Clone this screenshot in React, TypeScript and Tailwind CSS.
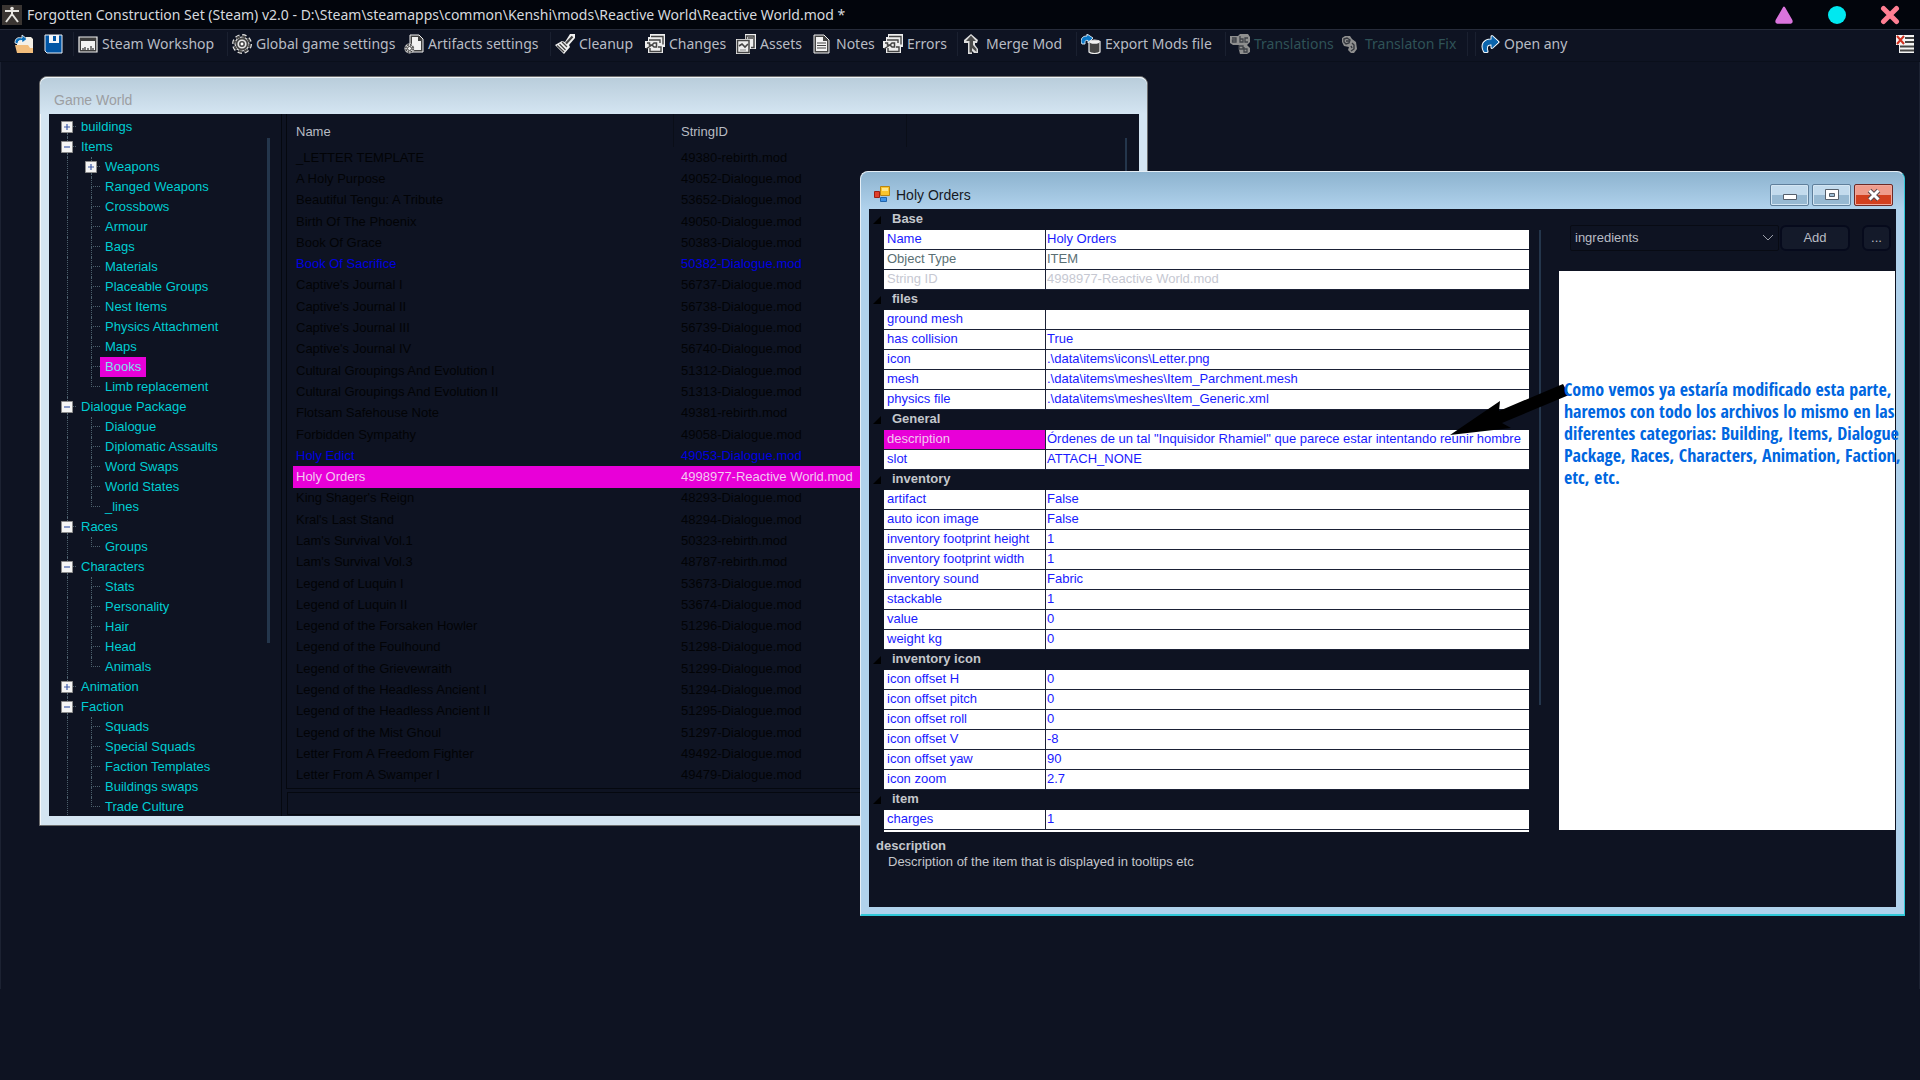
import React from "react";

type Node = { label: string; open?: boolean; children?: Node[]; selected?: boolean };

const leaf = (label: string): Node => ({ label });

const tree: Node[] = [
  { label: "buildings", open: false },
  {
    label: "Items",
    open: true,
    children: [
      { label: "Weapons", open: false },
      leaf("Ranged Weapons"),
      leaf("Crossbows"),
      leaf("Armour"),
      leaf("Bags"),
      leaf("Materials"),
      leaf("Placeable Groups"),
      leaf("Nest Items"),
      leaf("Physics Attachment"),
      leaf("Maps"),
      { label: "Books", selected: true },
      leaf("Limb replacement"),
    ],
  },
  {
    label: "Dialogue Package",
    open: true,
    children: [
      leaf("Dialogue"),
      leaf("Diplomatic Assaults"),
      leaf("Word Swaps"),
      leaf("World States"),
      leaf("_lines"),
    ],
  },
  { label: "Races", open: true, children: [leaf("Groups")] },
  {
    label: "Characters",
    open: true,
    children: [
      leaf("Stats"),
      leaf("Personality"),
      leaf("Hair"),
      leaf("Head"),
      leaf("Animals"),
    ],
  },
  { label: "Animation", open: false },
  {
    label: "Faction",
    open: true,
    children: [
      leaf("Squads"),
      leaf("Special Squads"),
      leaf("Faction Templates"),
      leaf("Buildings swaps"),
      leaf("Trade Culture"),
    ],
  },
];

const books: [string, string, string?][] = [
  ["_LETTER TEMPLATE", "49380-rebirth.mod"],
  ["A Holy Purpose", "49052-Dialogue.mod"],
  ["Beautiful Tengu: A Tribute", "53652-Dialogue.mod"],
  ["Birth Of The Phoenix", "49050-Dialogue.mod"],
  ["Book Of Grace", "50383-Dialogue.mod"],
  ["Book Of Sacrifice", "50382-Dialogue.mod", "changed"],
  ["Captive's Journal I", "56737-Dialogue.mod"],
  ["Captive's Journal II", "56738-Dialogue.mod"],
  ["Captive's Journal III", "56739-Dialogue.mod"],
  ["Captive's Journal IV", "56740-Dialogue.mod"],
  ["Cultural Groupings And Evolution I", "51312-Dialogue.mod"],
  ["Cultural Groupings And Evolution II", "51313-Dialogue.mod"],
  ["Flotsam Safehouse Note", "49381-rebirth.mod"],
  ["Forbidden Sympathy", "49058-Dialogue.mod"],
  ["Holy Edict", "49053-Dialogue.mod", "changed"],
  ["Holy Orders", "4998977-Reactive World.mod", "selected"],
  ["King Shager's Reign", "48293-Dialogue.mod"],
  ["Kral's Last Stand", "48294-Dialogue.mod"],
  ["Lam's Survival Vol.1", "50323-rebirth.mod"],
  ["Lam's Survival Vol.3", "48787-rebirth.mod"],
  ["Legend of Luquin I", "53673-Dialogue.mod"],
  ["Legend of Luquin II", "53674-Dialogue.mod"],
  ["Legend of the Forsaken Howler", "51296-Dialogue.mod"],
  ["Legend of the Foulhound", "51298-Dialogue.mod"],
  ["Legend of the Grievewraith", "51299-Dialogue.mod"],
  ["Legend of the Headless Ancient I", "51294-Dialogue.mod"],
  ["Legend of the Headless Ancient II", "51295-Dialogue.mod"],
  ["Legend of the Mist Ghoul", "51297-Dialogue.mod"],
  ["Letter From A Freedom Fighter", "49492-Dialogue.mod"],
  ["Letter From A Swamper I", "49479-Dialogue.mod"],
];

const groups: { name: string; rows: [string, string, string?][] }[] = [
  {
    name: "Base",
    rows: [
      ["Name", "Holy Orders"],
      ["Object Type", "ITEM", "readonly"],
      ["String ID", "4998977-Reactive World.mod", "disabled"],
    ],
  },
  {
    name: "files",
    rows: [
      ["ground mesh", ""],
      ["has collision", "True"],
      ["icon", ".\\data\\items\\icons\\Letter.png"],
      ["mesh", ".\\data\\items\\meshes\\Item_Parchment.mesh"],
      ["physics file", ".\\data\\items\\meshes\\Item_Generic.xml"],
    ],
  },
  {
    name: "General",
    rows: [
      [
        "description",
        'Órdenes de un tal "Inquisidor Rhamiel" que parece estar intentando reunir hombre',
        "selected",
      ],
      ["slot", "ATTACH_NONE"],
    ],
  },
  {
    name: "inventory",
    rows: [
      ["artifact", "False"],
      ["auto icon image", "False"],
      ["inventory footprint height", "1"],
      ["inventory footprint width", "1"],
      ["inventory sound", "Fabric"],
      ["stackable", "1"],
      ["value", "0"],
      ["weight kg", "0"],
    ],
  },
  {
    name: "inventory icon",
    rows: [
      ["icon offset H", "0"],
      ["icon offset pitch", "0"],
      ["icon offset roll", "0"],
      ["icon offset V", "-8"],
      ["icon offset yaw", "90"],
      ["icon zoom", "2.7"],
    ],
  },
  { name: "item", rows: [["charges", "1"]] },
];

// ---- toolbar icons, all on a 20x20 grid ----

const Svg: React.FC<{ children: React.ReactNode }> = ({ children }) => (
  <svg viewBox="0 0 20 20" className="h-5 w-5 shrink-0" aria-hidden="true">
    {children}
  </svg>
);

const FolderIcon = () => (
  <Svg>
    <path d="M3 6h8l1-3h5l2 2v14H3z" fill="#f4efe6" />
    <path d="M1 11h13l2 3h3v5H3z" fill="#f2bd7c" />
    <path d="M1 9C1 4 4 3 8 4V1l5 4-5 4V6.500C5 6 4 7 4 10z" fill="#0a6db8" stroke="#fff" strokeWidth=".8" />
  </Svg>
);

const SaveIcon = () => (
  <Svg>
    <path d="M1 1h17v18H3l-2-2z" fill="#0055a5" stroke="#e8eef4" strokeWidth="1" />
    <path d="M5 1h10v8H5z" fill="#f2f4f8" />
    <path d="M9 2h3v5H9z" fill="#0055a5" />
  </Svg>
);

const WorkshopIcon = () => (
  <Svg>
    <path d="M1 3h18v15H1z" fill="#3d3d3d" stroke="#eee" strokeWidth="1.200" />
    <path d="M3 7h14v9H3z" fill="#f3f3f3" />
    <path d="M5 16v-2m2 2v-3m3 3v-2m3 2v-4m2 4v-2" stroke="#3d3d3d" strokeWidth="1.300" />
  </Svg>
);

const GearIcon = () => (
  <Svg>
    <circle cx="10" cy="10" r="8" fill="none" stroke="#e6e6e6" strokeWidth="4" strokeDasharray="3.800 2.480" />
    <circle cx="10" cy="10" r="7.500" fill="#e6e6e6" />
    <circle cx="10" cy="10" r="7.700" fill="none" stroke="#444" strokeWidth="2.200" strokeDasharray="3.600 2.450" />
    <circle cx="10" cy="10" r="5.500" fill="#e6e6e6" stroke="#444" strokeWidth="1.800" />
    <circle cx="10" cy="10" r="2.200" fill="#fff" stroke="#444" strokeWidth="1.500" />
  </Svg>
);

const ArtifactIcon = () => (
  <Svg>
    <path d="M6 1h9l4 4v13H6z" fill="#3f3f3f" stroke="#f0f0f0" strokeWidth="1" />
    <path d="M8 3h6v4h3v9H8z" fill="#f2f2f2" />
    <circle cx="5.500" cy="14.500" r="5" fill="#ddd" />
    <circle cx="5.500" cy="14.500" r="3.700" fill="none" stroke="#444" strokeWidth="1.500" strokeDasharray="1.900 1" />
    <circle cx="5.500" cy="14.500" r="2" fill="#eee" stroke="#444" />
  </Svg>
);

const BroomIcon = () => (
  <Svg>
    <path d="M15 0h5v4l-6 7 1 2-6 7-9-9 7-4 3 1z" fill="#f1f1f1" />
    <path d="M17.500 2.500 11 9.500" stroke="#444" strokeWidth="2.200" />
    <path d="m7 8 5 5M2 11.500l7 6.500M4.500 10 10.500 16" stroke="#444" strokeWidth="1.300" />
  </Svg>
);

const ChangesIcon = () => (
  <Svg>
    <path d="M5 0h15v13h-2v6H3v-5H0V7h3V3h2z" fill="#eee" />
    <path d="M6 2.500h12v8M4 6h11v3M5 14v3.500h11V13h-3" fill="none" stroke="#444" strokeWidth="1.400" />
    <path d="M2 9h2.500v2H7l2-2h2.500v4H9l-2-2-3 2-3 2" fill="none" stroke="#444" strokeWidth="1.500" />
  </Svg>
);

const AssetsIcon = () => (
  <Svg>
    <path d="M9 0h11v15h-6v5H0V5h9z" fill="#eee" />
    <path d="M10.500 5V2H18v11.500h-3M1.500 6.500h11.500v12H1.500z" fill="none" stroke="#444" strokeWidth="1.500" />
    <path d="M3 12l3-2 3 3 3-3M12 4h5" fill="none" stroke="#444" strokeWidth="1.600" />
    <path d="M4 16h6" stroke="#888" />
  </Svg>
);

const NotesIcon = () => (
  <Svg>
    <path d="M2 1h10l5 5v13H2z" fill="#444" stroke="#eee" strokeWidth="1" />
    <path d="M4 3h7v4h4v10H4z" fill="#f4f4f4" />
    <path d="M5 9h9M5 11.500h9M5 14h9" stroke="#444" strokeWidth="1.200" />
  </Svg>
);

const MergeIcon = () => (
  <Svg>
    <path d="m9 0 7 6-1 3h-2v2l3 4v4h-4l-2-2v3H6V9L2 9V6z" fill="#ddd" />
    <path d="m9 1.500 5 5.500h-3v4l3.500 4v3L10 14v4.500H7.500V7H4z" fill="#4a4a4a" />
  </Svg>
);

const ExportIcon = () => (
  <Svg>
    <path d="M0 8C0 3 3 2 6 2V0l6 4-5 5V6.500C4 6 4 7 4 10H1z" fill="#0a78c8" stroke="#e8f2fa" strokeWidth=".9" />
    <path d="M8 7.500c2-2 9-2 11 0V18c-2 2-9 2-11 0z" fill="#444" stroke="#eee" strokeWidth="1.200" />
    <ellipse cx="13.500" cy="8" rx="5" ry="1.800" fill="#f2f2f2" />
  </Svg>
);

const TranslationsIcon = () => (
  <Svg>
    <path d="M0 2h8l2-2h8l2 3v5l-3 3 3 3v4l-3 2h-7l-1-4V11H3L0 9z" fill="#8f8f8f" />
    <path d="M2 4h4v4H2.500V6H6M10 2v6h3V5h-3M18 4h-3v4h3M9 12h4v3H9zM14 13v5h3v-3h-3" fill="none" stroke="#3f4248" strokeWidth="1.300" />
  </Svg>
);

const FixIcon = () => (
  <Svg>
    <path d="M1 4l3-2h5l2 3 4 3 1 7-3 4h-3l-3-3 1-3-5-1-2-4z" fill="#8f8f8f" />
    <path d="M3 5l3-1 3 2-1 3-3 1-2-2zM5 7h3M11 9l2 2v4l-3 2M10 12l1 2" fill="none" stroke="#34373e" strokeWidth="1.400" />
  </Svg>
);

const OpenIcon = () => (
  <Svg>
    <path
      d="M4.500 17.500C1 11 4 5.500 12 6V2.500L18 8l-6 5.500V10c-5-.5-6.500 2.500-5 7.500z"
      fill="#0a64ac"
      stroke="#eaf3fa"
      strokeWidth="3"
      strokeLinejoin="round"
    />
    <path d="M4.500 17.500C1 11 4 5.500 12 6V2.500L18 8l-6 5.500V10c-5-.5-6.500 2.500-5 7.500z" fill="#0a64ac" stroke="#0a64ac" />
  </Svg>
);

const CloseAllIcon = () => (
  <Svg>
    <path d="M1 1h18v18H4V11H1z" fill="#f4f4f4" />
    <path d="M10 4h9M10 8h9M5 12.500h14M5 16.500h14" stroke="#444" strokeWidth="1.800" />
    <path d="m2 2 7 8m0-8-7 8" stroke="#d03020" strokeWidth="2" />
  </Svg>
);

const Sep = () => <span className="h-6 w-px shrink-0 bg-[#1a2030]" />;

type ToolProps = { icon: React.ReactNode; label: string; width: string; disabled?: boolean };

const Tool: React.FC<ToolProps> = ({ icon, label, width, disabled }) => (
  <button
    disabled={disabled}
    className={`flex h-7 shrink-0 items-center gap-1 whitespace-nowrap pl-1 ${width} ${
      disabled ? "text-[#2f5257]" : "text-[#b8bcc4]"
    }`}
  >
    {icon}
    {label}
  </button>
);

const Toolbar = () => (
  <nav className="flex h-[33px] items-center border-y border-t-[#262b3a] border-b-[#0a0f1b] pb-1 pl-[10px] pr-[5px] text-sm">
    <button aria-label="Open" className="w-[30px] pl-1">
      <FolderIcon />
    </button>
    <button aria-label="Save" className="w-[33px] pl-1">
      <SaveIcon />
    </button>
    <Sep />
    <Tool icon={<WorkshopIcon />} label="Steam Workshop" width="w-[153px]" />
    <Sep />
    <Tool icon={<GearIcon />} label="Global game settings" width="w-[172px]" />
    <Tool icon={<ArtifactIcon />} label="Artifacts settings" width="w-[150px]" />
    <Sep />
    <Tool icon={<BroomIcon />} label="Cleanup" width="w-[90px]" />
    <Tool icon={<ChangesIcon />} label="Changes" width="w-[91px]" />
    <Tool icon={<AssetsIcon />} label="Assets" width="w-[76px]" />
    <Tool icon={<NotesIcon />} label="Notes" width="w-[71px]" />
    <Tool icon={<ChangesIcon />} label="Errors" width="w-[78px]" />
    <Sep />
    <Tool icon={<MergeIcon />} label="Merge Mod" width="w-[118px]" />
    <Sep />
    <Tool icon={<ExportIcon />} label="Export Mods file" width="w-[148px]" />
    <Sep />
    <Tool icon={<TranslationsIcon />} label="Translations" width="w-[111px]" disabled />
    <Tool icon={<FixIcon />} label="Translaton Fix" width="w-[130px]" disabled />
    <Sep />
    <span className="w-[7px]" />
    <Sep />
    <Tool icon={<OpenIcon />} label="Open any" width="w-[100px]" />
    <button aria-label="Close all windows" className="ml-auto">
      <CloseAllIcon />
    </button>
  </nav>
);

const TitleBar = () => (
  <header className="flex h-[29px] items-center bg-[#02050c] pl-[2px] pr-5 text-sm text-[#d6d9de]">
    <svg viewBox="0 0 20 20" className="h-5 w-5 shrink-0" aria-hidden="true">
      <path d="M0 0h20v20H0z" fill="#3a3532" />
      <path d="M3 6h14M10 3v8M10 9l-6 8M10 9l6 8" stroke="#e8e6e2" strokeWidth="2" fill="none" />
      <circle cx="10" cy="3.500" r="1.800" fill="#e8e6e2" />
    </svg>
    <h1 className="pl-[5px]">
      Forgotten Construction Set (Steam) v2.0 - D:\Steam\steamapps\common\Kenshi\mods\Reactive
      World\Reactive World.mod *
    </h1>
    <div className="ml-auto flex gap-[33px]">
      <button aria-label="Minimize">
        <svg viewBox="0 0 20 20" className="h-5 w-5">
          <path
            d="M10 2.500 17.500 15.500q.6 2-1 2.300h-13q-1.600-.3-1-2.300z"
            fill="#da74dc"
            stroke="#da74dc"
            strokeWidth="2"
            strokeLinejoin="round"
          />
        </svg>
      </button>
      <button aria-label="Maximize">
        <svg viewBox="0 0 20 20" className="h-5 w-5">
          <circle cx="10" cy="10" r="9" fill="#00e8f0" />
        </svg>
      </button>
      <button aria-label="Close">
        <svg viewBox="0 0 20 20" className="h-5 w-5">
          <path d="m3.500 3.500 13 13m0-13-13 13" stroke="#ff7f93" strokeWidth="5" strokeLinecap="round" />
        </svg>
      </button>
    </div>
  </header>
);

const Expander: React.FC<{ open?: boolean; first?: boolean }> = ({ open, first }) => (
  <span className="flex h-5 w-[15px] shrink-0">
    <span className="flex w-3 flex-col items-center">
      <span className={`h-1 border-l border-dotted ${first ? "border-transparent" : "border-[#4c5f6c]"}`} />
      <svg viewBox="0 0 12 12" className="h-3 w-3">
        <path d="M.5.5h11v11H.5z" fill="#f4f4f4" stroke="#8c8c8c" />
        <path d={open ? "M3 6h6" : "M3 6h6M6 3v6"} stroke="#3c5aa8" strokeWidth="1.200" />
      </svg>
      <span className="h-1 border-l border-dotted border-[#4c5f6c]" />
    </span>
    <span className="h-[10px] w-[3px] border-b border-dotted border-[#4c5f6c]" />
  </span>
);

const Branch: React.FC<{ last: boolean }> = ({ last }) => (
  <span className="flex h-5 w-[15px] shrink-0 flex-col pl-[6px]">
    <span className="h-[10px] border-b border-l border-dotted border-[#4c5f6c]" />
    {!last && <span className="h-[10px] border-l border-dotted border-[#4c5f6c]" />}
  </span>
);

const TreePane = () => (
  <div className="flex w-[233px] shrink-0 overflow-hidden border-r border-[#05080f] pl-3 pt-[3px]">
    <ul className="flex-1 text-[#00cdd2]">
      {tree.map((node, i) => (
        <li key={node.label}>
          <div className="flex h-5 items-center">
            <Expander open={node.open} first={i === 0} />
            <span className="pl-[5px]">{node.label}</span>
          </div>
          {node.children && (
            <ul>
              {node.children.map((child, j) => (
                <li key={child.label} className="flex h-5 items-center">
                  <span className="flex h-5 w-6 shrink-0 pl-[6px]">
                    <span className="border-l border-dotted border-[#4c5f6c]" />
                  </span>
                  {child.open === undefined ? (
                    <Branch last={j === node.children!.length - 1} />
                  ) : (
                    <Expander open={child.open} />
                  )}
                  <span
                    className={`px-[5px] leading-5 ${
                      child.selected ? "bg-[#e800d8] text-[#7ce0ee]" : ""
                    }`}
                  >
                    {child.label}
                  </span>
                </li>
              ))}
            </ul>
          )}
        </li>
      ))}
    </ul>
    <div className="mr-[11px] mt-[21px] h-[505px] w-[3px] bg-[#24364c]" />
  </div>
);

const rowColor = (state?: string) => {
  if (state === "changed") return "text-[#0000e0]";
  if (state === "selected") return "bg-[#e800d8] text-[#f3c8f0]";
  return "text-[#020306]";
};

const BookList = () => (
  <div className="ml-1 flex min-w-0 flex-1 flex-col">
    <div className="flex h-[675px] border-b border-l border-[#05080f] pl-[6px]">
      <table className="h-[672px] flex-1 table-fixed border-separate border-spacing-0 text-left">
        <thead>
          <tr className="h-[33px] text-[#b8bcc4]">
            <th className="w-[381px] border-r border-[#0a0e18] p-0 pl-[3px] pt-[2px] font-normal">Name</th>
            <th className="w-[233px] border-r border-[#0a0e18] p-0 pl-[7px] pt-[2px] font-normal">StringID</th>
            <th />
          </tr>
        </thead>
        <tbody>
          {books.map(([name, id, state]) => (
            <tr key={id} className={rowColor(state)}>
              <td className="p-0 pl-[3px] leading-4">{name}</td>
              <td className="p-0 pl-[7px] leading-4">{id}</td>
              <td className="p-0" />
            </tr>
          ))}
        </tbody>
      </table>
      <div className="mr-3 mt-6 h-[505px] w-[2px] bg-[#24364c]" />
    </div>
    <div className="mb-px ml-px mt-[3px] flex-1 border border-[#05080f]" />
  </div>
);

const GameWorld = () => (
  <section className="absolute left-[39px] top-[14px] flex h-[750px] w-[1109px] flex-col rounded-t-lg border border-[#6d6d6d] bg-[#d4e5f2] shadow-[inset_1px_1px_0_#f4f8fb]">
    <h2 className="flex h-[37px] items-center rounded-t-lg border-t border-[#eef4f8] bg-linear-to-b from-[#b9cddb] to-[#d4e5f2] pl-[14px] pt-2 text-sm text-[#9c9ea2]">
      Game World
    </h2>
    <div className="mb-[9px] ml-[9px] mr-2 flex min-h-0 flex-1 bg-[#0e1322]">
      <TreePane />
      <BookList />
    </div>
  </section>
);

const valueColor = (state?: string) => {
  if (state === "readonly") return "text-[#5a6f74]";
  if (state === "disabled") return "text-[#c6c8d2]";
  return "text-[#1a1aff]";
};

const PropertyGrid = () => (
  <table className="w-full table-fixed border-separate border-spacing-0 text-left">
    <colgroup>
      <col className="w-[15px]" />
      <col className="w-[162px]" />
      <col />
    </colgroup>
    {groups.map((group) => (
      <tbody key={group.name}>
        <tr className="h-5">
          <td className="p-0 pl-1">
            <svg viewBox="0 0 8 8" className="h-2 w-2">
              <path d="M8 0v8H0z" fill="#000" />
            </svg>
          </td>
          <th colSpan={2} className="p-0 pb-[2px] pl-2 leading-[18px] text-[#c4c7cc]">
            {group.name}
          </th>
        </tr>
        {group.rows.map(([label, value, state]) => (
          <tr key={label} className="h-5">
            <td className="p-0" />
            <td
              className={`border-b border-r border-[#1b2136] p-0 pb-[2px] pl-[3px] leading-[17px] ${
                state === "selected" ? "bg-[#e800d8] text-[#f3c8f0]" : `bg-white ${valueColor(state)}`
              }`}
            >
              {label}
            </td>
            <td
              className={`overflow-hidden whitespace-nowrap border-b border-[#1b2136] bg-white p-0 pb-[2px] pl-px leading-[17px] ${valueColor(
                state
              )}`}
            >
              {value}
            </td>
          </tr>
        ))}
      </tbody>
    ))}
  </table>
);

const CaptionButtons = () => (
  <div className="flex gap-[3px]">
    <button
      aria-label="Minimize"
      className="flex h-[22px] w-[39px] items-center justify-center rounded-xs border border-[#5f7f9b] bg-linear-to-b from-[#c3dbed] from-50% to-[#97b9d2] to-50% shadow-[inset_0_0_0_1px_#d4e6f3]"
    >
      <svg viewBox="0 0 14 14" className="h-[14px] w-[14px]">
        <path d="M.5 6.500h13v5H.5z" fill="#fff" stroke="#555f6b" />
      </svg>
    </button>
    <button
      aria-label="Restore"
      className="flex h-[22px] w-[39px] items-center justify-center rounded-xs border border-[#5f7f9b] bg-linear-to-b from-[#c3dbed] from-50% to-[#97b9d2] to-50% shadow-[inset_0_0_0_1px_#d4e6f3]"
    >
      <svg viewBox="0 0 14 14" className="h-[14px] w-[14px]">
        <path d="M.5 1.500h13v10H.5z" fill="#fff" stroke="#555f6b" />
        <path d="M4.500 5.500h5v3h-5z" fill="#9dbdd5" stroke="#555f6b" />
      </svg>
    </button>
    <button
      aria-label="Close"
      className="flex h-[22px] w-[39px] items-center justify-center rounded-xs border border-[#6d2a26] bg-linear-to-b from-[#ef9c8c] from-50% to-[#d2401f] to-50% shadow-[inset_0_0_0_1px_#f0a89c]"
    >
      <svg viewBox="0 0 14 14" className="h-[14px] w-[14px]">
        <path d="m2.500 2.500 9 9m0-9-9 9" stroke="#5a4a50" strokeWidth="5" />
        <path d="m2.500 2.500 9 9m0-9-9 9" stroke="#fff" strokeWidth="3" />
      </svg>
    </button>
  </div>
);

const FormIcon = () => (
  <svg viewBox="0 0 17 17" className="h-[17px] w-[17px]" aria-hidden="true">
    <path d="M7.500.5h9v9h-9z" fill="#fbc52c" stroke="#b98512" />
    <path d="M9 2h6v3H9z" fill="#fde68c" />
    <path d="M1.500 5.500h5v6h-5z" fill="#e0402c" stroke="#9c2013" />
    <path d="M7.500 11.500h6v4h-6z" fill="#3f94e8" stroke="#2166ac" />
  </svg>
);

const ItemEditor = () => (
  <section className="absolute left-[860px] top-[109px] flex h-[745px] w-[1045px] flex-col rounded-t-lg border border-b-2 border-[#30c8d8] border-l-[#e4eef6] border-t-[#e4eef6] bg-[#b0d2ec]">
    <div className="flex h-[37px] items-center rounded-t-lg bg-linear-to-b from-[#8db3cf] to-[#b0d2ec] pl-3 pr-[11px] pt-2">
      <FormIcon />
      <h2 className="pl-[6px] text-sm text-[#16191f]">Holy Orders</h2>
      <div className="ml-auto">
        <CaptionButtons />
      </div>
    </div>
    <div className="mx-2 mb-[7px] flex min-h-0 flex-1 bg-[#0e1322]">
      <div className="w-[660px] shrink-0">
        <div className="h-[623px] overflow-hidden pt-px">
          <PropertyGrid />
          <div className="ml-[15px] h-[2px] bg-white" />
        </div>
        <div className="pl-[7px] pt-[6px] text-[#c4c7cc]">
          <h3 className="font-bold leading-4">description</h3>
          <p className="pl-3 leading-4">Description of the item that is displayed in tooltips etc</p>
        </div>
      </div>
      <div className="ml-[10px] mt-[21px] h-[475px] w-[2px] shrink-0 bg-[#24364c]" />
      <div className="ml-[18px] flex flex-1 flex-col pt-[15px]">
        <div className="flex h-[27px] items-center pl-[11px] pr-[5px]">
          <span className="flex h-[26px] w-[209px] items-center rounded-xs border border-[#080b14] pr-1 text-[#b8bcc4]">
            <select
              aria-label="Reference type"
              defaultValue="ingredients"
              className="h-full flex-1 appearance-none bg-transparent pl-1 outline-none"
            >
              <option>ingredients</option>
            </select>
            <svg viewBox="0 0 12 8" className="h-2 w-3">
              <path d="m1 1 5 5 5-5" fill="none" stroke="#9a9ea8" />
            </svg>
          </span>
          <button className="ml-px h-[26px] w-[70px] rounded-md border-2 border-[#060a1c] bg-[#141a2a] text-[#b8bcc4]">
            Add
          </button>
          <button
            aria-label="More"
            className="ml-auto h-[26px] w-[29px] rounded-md border-2 border-[#060a1c] bg-[#141a2a] text-[#b8bcc4]"
          >
            ...
          </button>
        </div>
        <div className="mr-px mt-5 h-[559px] bg-white" />
      </div>
    </div>
  </section>
);

// Note and pointer lying over the editor window
const Note = () => (
  <>
    <svg viewBox="0 0 120 54" className="absolute left-[1450px] top-[321px] h-[54px] w-[120px]" aria-hidden="true">
      <path d="M0 52 50 18 49 28 113 1 119 12 52 40 61 45z" fill="#000" />
    </svg>
    <p className="absolute left-[1564px] top-[316px] whitespace-nowrap font-['Open_Sans_Condensed','Liberation_Sans_Narrow','Open_Sans',sans-serif] text-[18px] font-bold leading-[22px] text-[#0066e0]">
      Como vemos ya estaría modificado esta parte,
      <br />
      haremos con todo los archivos lo mismo en las
      <br />
      diferentes categorias: Building, Items, Dialogue
      <br />
      Package, Races, Characters, Animation, Faction,
      <br />
      etc, etc.
    </p>
  </>
);

const App = () => (
  <div className="flex min-h-screen flex-col overflow-hidden bg-[#0e1322] font-['Noto_Sans','Open_Sans',sans-serif]">
    <TitleBar />
    <Toolbar />
    <main className="relative flex-1 font-['Noto_Sans','Open_Sans',sans-serif]">
      <div className="h-[927px] border-x border-[#1c2232] font-['Liberation_Sans',Arial,sans-serif] text-[13px]">
        <GameWorld />
        <ItemEditor />
      </div>
      <Note />
    </main>
  </div>
);

export default App;
